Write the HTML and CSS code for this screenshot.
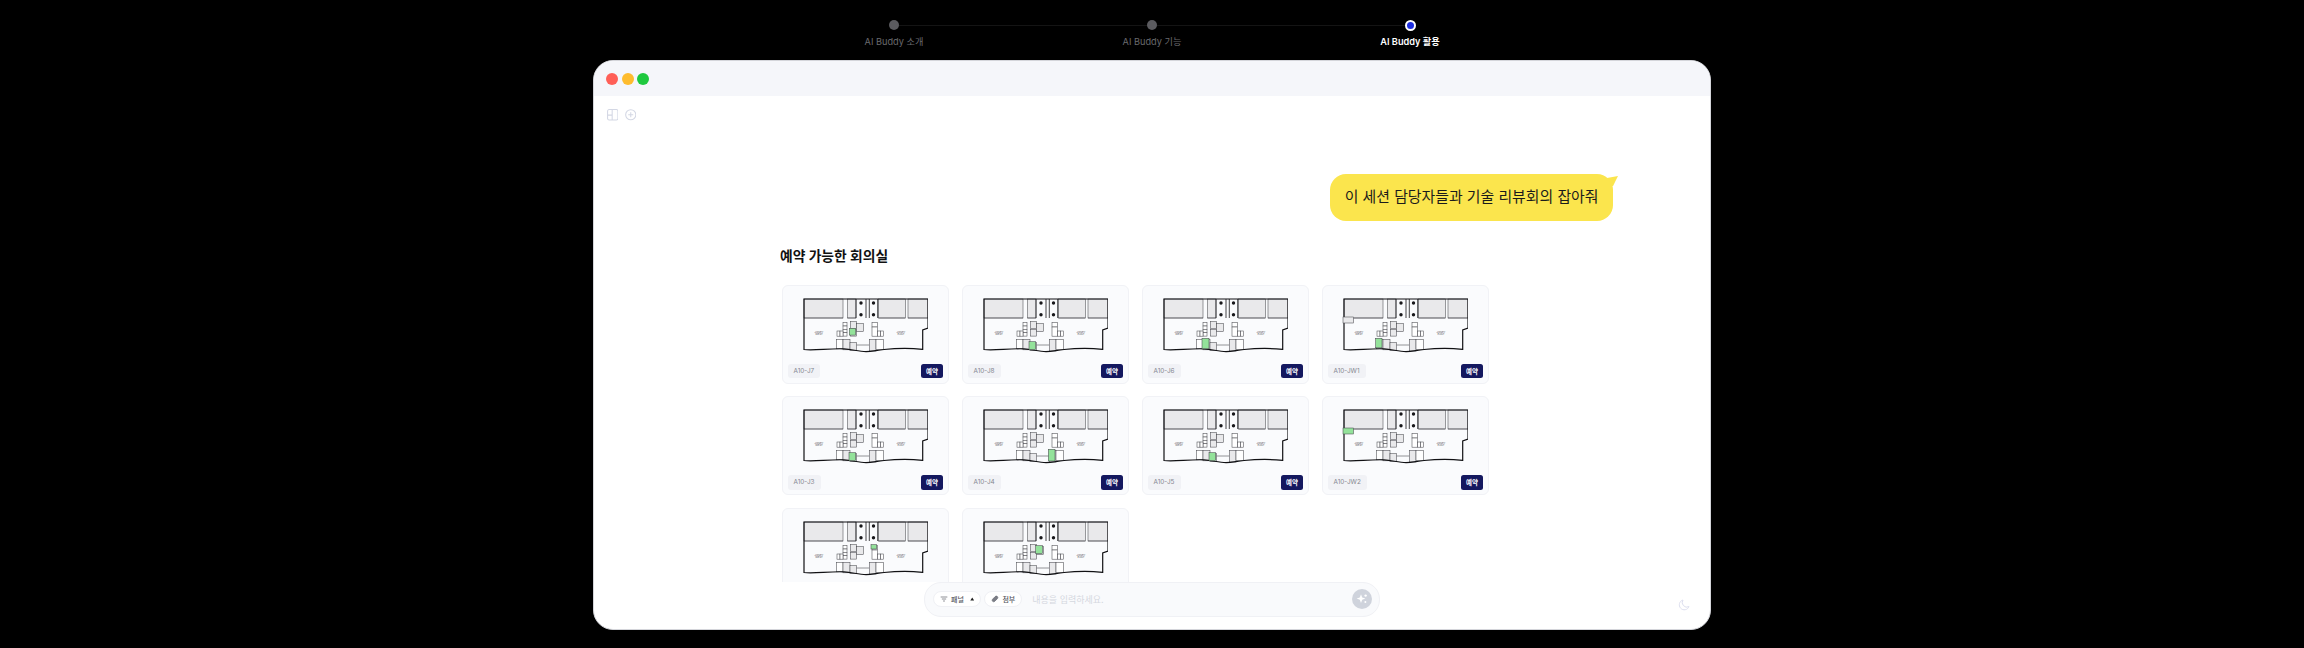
FILE: index.html
```html
<!DOCTYPE html>
<html lang="ko">
<head>
    <meta charset="UTF-8">
    <meta name="viewport" content="width=device-width, initial-scale=1.0">
    <title>AI Buddy 활용</title>
    <link rel="stylesheet" href="styles.css">
</head>
<body>

    <!-- 도면 원본: 카드마다 use로 재사용 -->
    <svg class="defs" width="0" height="0" aria-hidden="true">
        <symbol id="plan" viewBox="-1 -1 126 56">
            <rect class="room" x="0" y="0" width="39" height="19"/>
            <rect class="room" x="43.7" y="0" width="8.3" height="19"/>
            <rect class="room" x="74.7" y="0" width="26.6" height="19"/>
            <rect class="room" x="104" y="0" width="20" height="19"/>
            <path class="thin" d="M0 19H39M43.7 19H52M74.7 19H101.3M104 19H124"/>
            <path class="stair" d="M52 0V19M62 0V19M65.3 0V19M73.7 0V19"/>
            <circle class="dot" cx="57" cy="4" r="1.7"/>
            <circle class="dot" cx="57" cy="15.7" r="1.7"/>
            <circle class="dot" cx="69.5" cy="4" r="1.7"/>
            <circle class="dot" cx="69.5" cy="15.7" r="1.7"/>

            <rect class="box" x="39" y="23.7" width="4" height="3.3"/>
            <rect class="box" x="39" y="27" width="4" height="3.3"/>
            <rect class="box" x="39" y="30.3" width="4" height="3.3"/>
            <rect class="box" x="39" y="33.6" width="4" height="3.5"/>
            <rect class="box" x="33" y="32" width="3" height="5.2"/>
            <rect class="box" x="36" y="32" width="3" height="5.2"/>
            <rect class="room" x="46.3" y="22.7" width="6.4" height="6.8"/>
            <rect class="room" x="46.3" y="30.3" width="6.4" height="6.8"/>
            <rect class="room" x="52.7" y="24.7" width="6.6" height="8"/>
            <rect class="box" x="68" y="23.7" width="5.7" height="4.3"/>
            <rect class="box" x="68" y="28" width="5.7" height="9.2"/>
            <rect class="box" x="73.7" y="32" width="3" height="5.2"/>
            <rect class="box" x="76.7" y="32" width="3" height="5.2"/>

            <rect class="box" x="32.7" y="40.3" width="6.3" height="9.5"/>
            <rect class="room" x="39" y="40.3" width="7" height="10.5"/>
            <rect class="room" x="46" y="43.7" width="6.7" height="8"/>
            <path class="thin" d="M52.7 46H65.3"/>
            <rect class="room" x="65.3" y="40.3" width="6.7" height="11.7"/>
            <rect class="box" x="72" y="40.3" width="7.3" height="10"/>

            <path class="wall" d="M0 50.5V0H124V29L118.7 31V50.3C105 49 90 49.5 80 50.5C72 51.3 68 52.6 62 52.6C55 52.6 48 50.3 40 49.8C25 49.2 10 51.8 0 50.5Z"/>
        </symbol>
    </svg>

    <div class="stepper">
        <div class="step"><span class="step-dot"></span><span class="step-label">AI Buddy 소개</span></div>
        <div class="step"><span class="step-dot"></span><span class="step-label">AI Buddy 기능</span></div>
        <div class="step active"><span class="step-dot"></span><span class="step-label">AI Buddy 활용</span></div>
    </div>

    <div class="window">
        <div class="titlebar">
            <span class="light red"></span>
            <span class="light yellow"></span>
            <span class="light green"></span>
        </div>

        <div class="main">
            <div class="tools">
                <svg class="tool" viewBox="0 0 12 12">
                    <rect x="0.6" y="0.6" width="10.8" height="10.8" rx="1.6"/>
                    <path d="M5.4 0.6V11.4M0.6 6.4H5.4"/>
                </svg>
                <svg class="tool" viewBox="0 0 12 12">
                    <circle cx="6" cy="6" r="5.3"/>
                    <path d="M6 3.4V8.6M3.4 6H8.6"/>
                </svg>
            </div>

            <div class="thread">
                <div class="bubble">이 세션 담당자들과 기술 리뷰회의 잡아줘</div>
                <h2 class="section-title">예약 가능한 회의실</h2>

                <div class="room-grid">
                    <div class="card">
                        <svg class="plan" viewBox="-1 -1 126 56"><use href="#plan"/><rect class="hl" x="46.3" y="30.3" width="6.4" height="6.8"/>
                            <text class="tag" x="16" y="34.5">JOSEY</text><text class="tag" x="16" y="37.3">WEST</text><text class="tag" x="98" y="34.5">JOSEY</text><text class="tag" x="98" y="37.3">EAST</text></svg>
                        <div class="card-foot"><span class="room-id">A10-J7</span><button class="book">예약</button></div>
                    </div>
                    <div class="card">
                        <svg class="plan" viewBox="-1 -1 126 56"><use href="#plan"/><rect class="hl" x="46" y="43.7" width="6.7" height="8"/>
                            <text class="tag" x="16" y="34.5">JOSEY</text><text class="tag" x="16" y="37.3">WEST</text><text class="tag" x="98" y="34.5">JOSEY</text><text class="tag" x="98" y="37.3">EAST</text></svg>
                        <div class="card-foot"><span class="room-id">A10-J8</span><button class="book">예약</button></div>
                    </div>
                    <div class="card">
                        <svg class="plan" viewBox="-1 -1 126 56"><use href="#plan"/><rect class="hl" x="39" y="40.3" width="7" height="10.5"/>
                            <text class="tag" x="16" y="34.5">JOSEY</text><text class="tag" x="16" y="37.3">WEST</text><text class="tag" x="98" y="34.5">JOSEY</text><text class="tag" x="98" y="37.3">EAST</text></svg>
                        <div class="card-foot"><span class="room-id">A10-J6</span><button class="book">예약</button></div>
                    </div>
                    <div class="card">
                        <svg class="plan" viewBox="-1 -1 126 56"><use href="#plan"/><rect class="room" x="0" y="19" width="10.5" height="6"/><rect class="hl" x="32.7" y="40.3" width="6.3" height="9.5"/>
                            <text class="tag" x="16" y="34.5">JOSEY</text><text class="tag" x="16" y="37.3">WEST</text><text class="tag" x="98" y="34.5">JOSEY</text><text class="tag" x="98" y="37.3">EAST</text></svg>
                        <div class="card-foot"><span class="room-id">A10-JW1</span><button class="book">예약</button></div>
                    </div>
                    <div class="card">
                        <svg class="plan" viewBox="-1 -1 126 56"><use href="#plan"/><rect class="hl" x="46" y="43.7" width="6.7" height="8"/>
                            <text class="tag" x="16" y="34.5">JOSEY</text><text class="tag" x="16" y="37.3">WEST</text><text class="tag" x="98" y="34.5">JOSEY</text><text class="tag" x="98" y="37.3">EAST</text></svg>
                        <div class="card-foot"><span class="room-id">A10-J3</span><button class="book">예약</button></div>
                    </div>
                    <div class="card">
                        <svg class="plan" viewBox="-1 -1 126 56"><use href="#plan"/><rect class="hl" x="65.3" y="40.3" width="6.7" height="11.7"/>
                            <text class="tag" x="16" y="34.5">JOSEY</text><text class="tag" x="16" y="37.3">WEST</text><text class="tag" x="98" y="34.5">JOSEY</text><text class="tag" x="98" y="37.3">EAST</text></svg>
                        <div class="card-foot"><span class="room-id">A10-J4</span><button class="book">예약</button></div>
                    </div>
                    <div class="card">
                        <svg class="plan" viewBox="-1 -1 126 56"><use href="#plan"/><rect class="hl" x="46" y="43.7" width="6.7" height="8"/>
                            <text class="tag" x="16" y="34.5">JOSEY</text><text class="tag" x="16" y="37.3">WEST</text><text class="tag" x="98" y="34.5">JOSEY</text><text class="tag" x="98" y="37.3">EAST</text></svg>
                        <div class="card-foot"><span class="room-id">A10-J5</span><button class="book">예약</button></div>
                    </div>
                    <div class="card">
                        <svg class="plan" viewBox="-1 -1 126 56"><use href="#plan"/><rect class="hl" x="0" y="19" width="10.5" height="6"/>
                            <text class="tag" x="16" y="34.5">JOSEY</text><text class="tag" x="16" y="37.3">WEST</text><text class="tag" x="98" y="34.5">JOSEY</text><text class="tag" x="98" y="37.3">EAST</text></svg>
                        <div class="card-foot"><span class="room-id">A10-JW2</span><button class="book">예약</button></div>
                    </div>
                    <div class="card">
                        <svg class="plan" viewBox="-1 -1 126 56"><use href="#plan"/><rect class="hl" x="68" y="23.7" width="5.7" height="4.3"/>
                            <text class="tag" x="16" y="34.5">JOSEY</text><text class="tag" x="16" y="37.3">WEST</text><text class="tag" x="98" y="34.5">JOSEY</text><text class="tag" x="98" y="37.3">EAST</text></svg>
                    </div>
                    <div class="card">
                        <svg class="plan" viewBox="-1 -1 126 56"><use href="#plan"/><rect class="hl" x="52.7" y="24.7" width="6.6" height="8"/>
                            <text class="tag" x="16" y="34.5">JOSEY</text><text class="tag" x="16" y="37.3">WEST</text><text class="tag" x="98" y="34.5">JOSEY</text><text class="tag" x="98" y="37.3">EAST</text></svg>
                    </div>
                </div>
            </div>
        </div>

        <div class="composer">
            <button class="chip">
                <svg class="chip-icon" viewBox="0 0 12 12"><path d="M1 3H11M2.8 6H9.2M4.6 9H7.4"/></svg>
                패널
                <svg class="caret" viewBox="0 0 6 5"><polygon points="3,0.5 5.6,4.5 0.4,4.5"/></svg>
            </button>
            <button class="chip">
                <svg class="chip-icon clip" viewBox="0 0 12 12"><path d="M9.6 2.4C8.6 1.4 7.2 1.5 6.3 2.4L2.6 6.1C1.5 7.2 1.5 8.6 2.4 9.5C3.3 10.4 4.7 10.4 5.8 9.3L9.6 5.5C10.5 4.6 10.5 3.4 9.6 2.4Z"/></svg>
                첨부
            </button>
            <span class="placeholder">내용을 입력하세요.</span>
            <span class="send">
                <svg viewBox="0 0 12 12"><path d="M5 1.2L6.2 4.4L9.4 5.6L6.2 6.8L5 10L3.8 6.8L0.6 5.6L3.8 4.4Z"/><circle cx="9.6" cy="2.6" r="1.2"/><circle cx="9.4" cy="9" r="1"/></svg>
            </span>
        </div>

        <svg class="moon" viewBox="0 0 12 12"><path d="M5 1A5 5 0 1 0 11 7.6A4.6 4.6 0 0 1 5 1Z"/></svg>
    </div>

</body>
</html>
```

FILE: styles.css
```css
html, body {
    margin: 0;
    height: 648px;
    overflow: hidden;
    background-color: #000;
}
body {
    font-family: Inter, "Noto Sans CJK KR", sans-serif;
    display: flex;
    flex-direction: column;
    align-items: center;
}
button {
    font-family: inherit;
    cursor: pointer;
}
.defs {
    position: absolute;
}

/* 상단 스텝 */
.stepper {
    position: relative;
    display: grid;
    grid-template-columns: repeat(3, 258px);
    height: 60px;
    box-sizing: border-box;
    padding-top: 20px;
}
.stepper::before {
    content: "";
    position: absolute;
    top: 25px;
    left: 129px;
    right: 129px;
    border-top: 1px solid #141414;
}
.step {
    position: relative;
    display: flex;
    flex-direction: column;
    align-items: center;
}
.step-dot {
    width: 10px;
    height: 10px;
    border-radius: 50%;
    background-color: #5b5b5f;
}
.step-label {
    margin-top: 5px;
    font-size: 9.2px;
    line-height: 13px;
    color: #6a6a6e;
}
.step.active .step-dot {
    box-sizing: border-box;
    width: 11px;
    height: 11px;
    background-color: #1c2de0;
    border: 2px solid #fff;
}
.step.active .step-label {
    margin-top: 4px;
    color: #fff;
    font-weight: 600;
}

/* 창 */
.window {
    position: relative;
    box-sizing: border-box;
    width: 1118px;
    height: 570px;
    display: flex;
    flex-direction: column;
    overflow: hidden;
    background-color: #fff;
    border: 1px solid #d4d5da;
    border-radius: 20px;
}
.titlebar {
    flex: none;
    height: 35px;
    display: flex;
    align-items: center;
    gap: 3.5px;
    padding-left: 12px;
    background-color: #f5f6fa;
}
.light {
    width: 12px;
    height: 12px;
    border-radius: 50%;
}
.red { background-color: #ff5f57; }
.yellow { background-color: #febc2e; }
.green { background-color: #1fc93f; }

.main {
    flex: 1;
    min-height: 0;
    overflow: hidden;
    padding-top: 13px;
}
.tools {
    display: flex;
    gap: 6.5px;
    height: 12px;
    padding-left: 12.5px;
}
.tool {
    width: 11.5px;
    height: 11.5px;
    fill: none;
    stroke: #d3d7e4;
    stroke-width: 1.1;
}
.thread {
    width: 833px;
    margin-left: 186px;
}
.bubble {
    position: relative;
    width: fit-content;
    margin: 53px 0 0 auto;
    padding: 0 14.5px;
    height: 47px;
    line-height: 46px;
    font-size: 14.9px;
    color: #1b1b1b;
    background-color: #fbe54d;
    border-radius: 16px;
}
.bubble::after {
    content: "";
    position: absolute;
    top: 2px;
    right: -5px;
    width: 11px;
    height: 10px;
    background-color: #fbe54d;
    clip-path: polygon(0 20%, 100% 0, 55% 100%, 0 100%);
}
.section-title {
    margin: 25px 0 0;
    font-size: 13.8px;
    line-height: 20px;
    font-weight: 700;
    color: #111;
}
.room-grid {
    display: grid;
    grid-template-columns: repeat(4, 167.5px);
    gap: 12.5px;
    margin: 18.5px 0 0 1.5px;
}
.card {
    box-sizing: border-box;
    height: 99px;
    padding: 11px 5px 5px;
    background-color: #fafbfd;
    border: 1px solid #f1f2f6;
    border-radius: 6px;
}
.plan {
    display: block;
    width: 126px;
    height: 56px;
    margin: 0 auto 11px;
}
.room { fill: #e9e9eb; stroke: #4a4b50; stroke-width: 0.55; }
.box { fill: #fff; stroke: #4a4b50; stroke-width: 0.55; }
.hl { fill: #93e29a; stroke: #4a4b50; stroke-width: 0.55; }
.thin { fill: none; stroke: #3c3d42; stroke-width: 0.55; }
.stair { fill: none; stroke: #17171a; stroke-width: 0.8; }
.wall { fill: none; stroke: #111114; stroke-width: 1.2; }
.dot { fill: #17171a; }
.tag {
    font-size: 2.7px;
    text-anchor: middle;
    fill: #55565c;
}
.card-foot {
    display: flex;
    justify-content: space-between;
    align-items: center;
}
.room-id {
    padding: 0 6px;
    height: 14.5px;
    line-height: 14.5px;
    font-size: 6.4px;
    color: #84868f;
    background-color: #f1f2f6;
    border-radius: 3px;
}
.book {
    width: 22px;
    height: 14.5px;
    padding: 0;
    font-size: 6.5px;
    font-weight: 700;
    color: #fff;
    background-color: #14185f;
    border: 0;
    border-radius: 2.5px;
}

/* 입력창 */
.composer {
    flex: none;
    box-sizing: border-box;
    width: 456px;
    height: 34.5px;
    margin: 0 auto 12.5px;
    display: flex;
    align-items: center;
    gap: 3px;
    padding: 0 7px 0 8px;
    background-color: #f9fafc;
    border: 1px solid #f0f1f5;
    border-radius: 17px;
}
.chip {
    height: 16px;
    display: flex;
    align-items: center;
    gap: 3px;
    padding: 0 6px;
    font-size: 7px;
    font-weight: 500;
    color: #555760;
    background-color: #fff;
    border: 1px solid #f0f1f5;
    border-radius: 8px;
}
.chip-icon {
    width: 8px;
    height: 8px;
    fill: none;
    stroke: #555760;
    stroke-width: 1;
}
.chip-icon.clip {
    fill: #7b7d86;
    stroke: #6a6c75;
}
.caret {
    width: 4.5px;
    height: 4px;
    margin-left: 3px;
    fill: #222;
}
.placeholder {
    margin-left: 7px;
    font-size: 9px;
    color: #d5d8df;
}
.send {
    width: 20px;
    height: 20px;
    margin-left: auto;
    display: flex;
    align-items: center;
    justify-content: center;
    background-color: #cfd3dc;
    border-radius: 50%;
}
.send svg {
    width: 12px;
    height: 12px;
    fill: #fff;
}
.moon {
    position: absolute;
    right: 20px;
    bottom: 18px;
    width: 12px;
    height: 12px;
    fill: none;
    stroke: #dcdeee;
    stroke-width: 1;
}
```
